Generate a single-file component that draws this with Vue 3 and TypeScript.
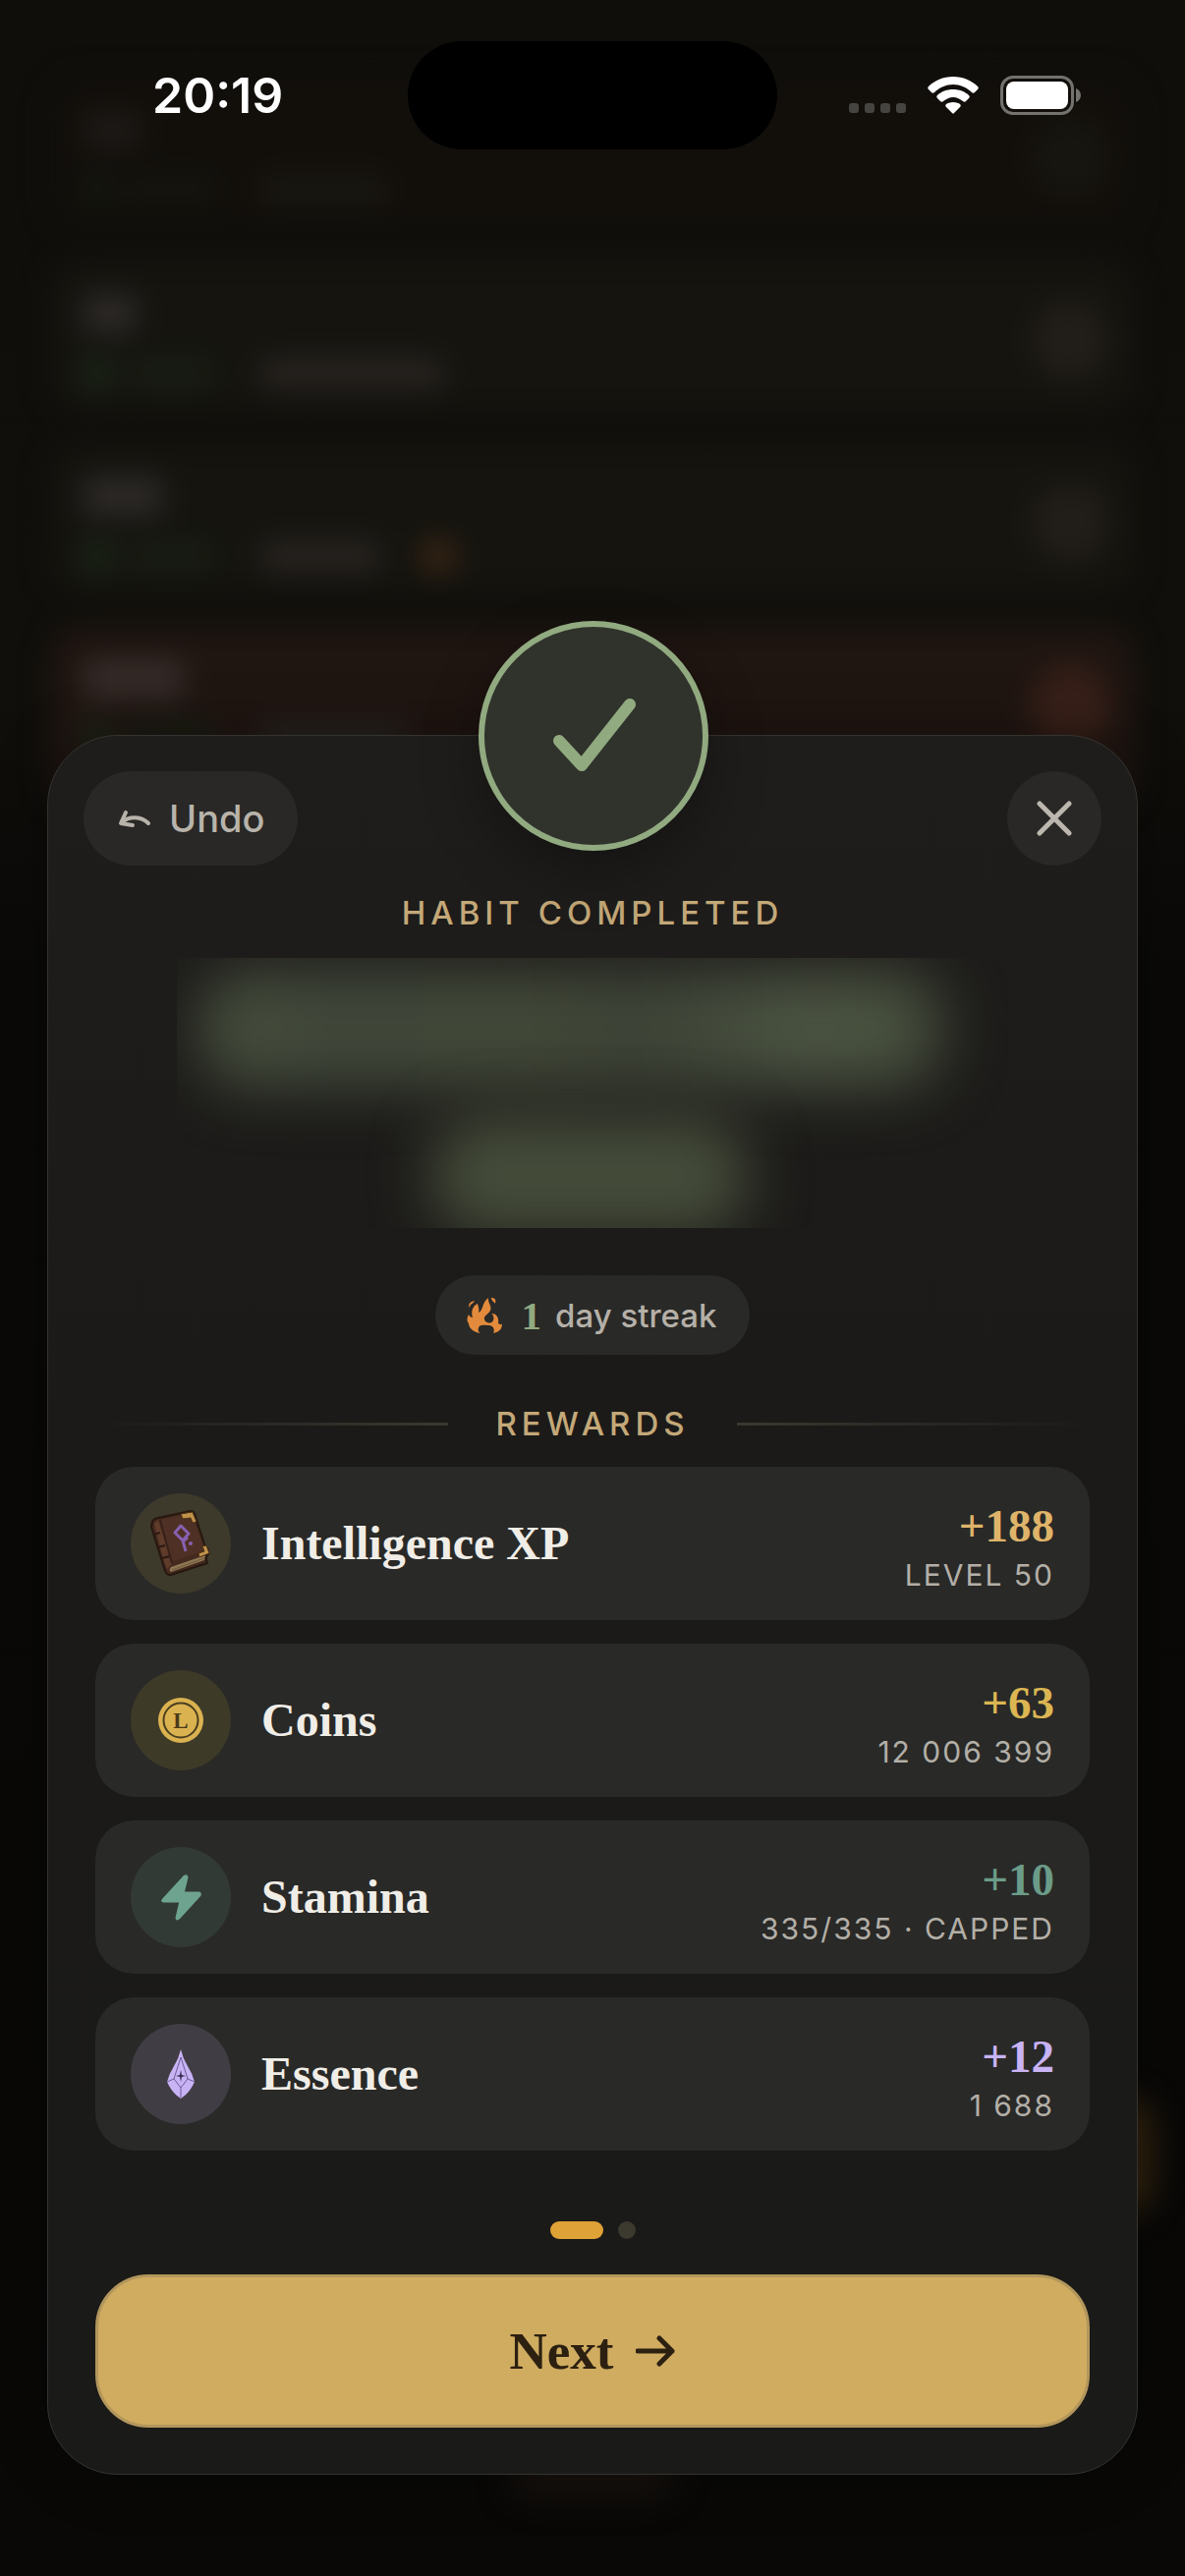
<script setup lang="ts">
interface Reward {
  id: 'intelligence' | 'coins' | 'stamina' | 'essence'
  name: string
  gain: string
  total: string
}

interface Habit {
  id: number
  title: number
  note: number
  streak: boolean
  overdue: boolean
}

const rewards: Reward[] = [
  { id: 'intelligence', name: 'Intelligence XP', gain: '+188', total: 'LEVEL 50' },
  { id: 'coins', name: 'Coins', gain: '+63', total: '12 006 399' },
  { id: 'stamina', name: 'Stamina', gain: '+10', total: '335/335 · CAPPED' },
  { id: 'essence', name: 'Essence', gain: '+12', total: '1 688' },
]

const habits: Habit[] = [
  { id: 1, title: 60, note: 130, streak: false, overdue: false },
  { id: 2, title: 56, note: 188, streak: false, overdue: false },
  { id: 3, title: 82, note: 124, streak: true, overdue: false },
  { id: 4, title: 104, note: 150, streak: false, overdue: true },
]
</script>

<template>
  <div class="screen">
    <div class="backdrop" aria-hidden="true">
      <div class="habits">
        <div v-for="h in habits" :key="h.id" class="habit" :class="{ overdue: h.overdue, first: h.id === 1 }">
          <div class="habit-text">
            <span class="smudge title" :style="{ width: h.title + 'px' }"></span>
            <div class="meta">
              <span class="smudge leaf"></span>
              <span class="smudge effort"></span>
              <span class="smudge note" :style="{ width: h.note + 'px' }"></span>
              <span v-if="h.streak" class="smudge ember"></span>
            </div>
          </div>
          <span class="smudge check"></span>
        </div>
      </div>
      <span class="glow side"></span>
      <span class="glow foot"></span>
    </div>

    <header class="status">
      <time class="clock">20:19</time>
      <div class="island"></div>
      <div class="signals">
        <svg class="cell" width="58" height="38" viewBox="0 0 58 38">
          <g fill="#454440">
            <rect x="0" y="27" width="10" height="10" rx="3" />
            <rect x="16" y="27" width="10" height="10" rx="3" />
            <rect x="32" y="27" width="10" height="10" rx="3" />
            <rect x="48" y="27" width="10" height="10" rx="3" />
          </g>
        </svg>
        <svg width="52" height="38" viewBox="0 0 52 38" fill="#fff">
          <path d="M26 0C36 0 45 4 51 10c1 1 1 2 0 3l-3 3c-1 1-2 1-3 0C40 11 33 8 26 8S12 11 7 16c-1 1-2 1-3 0l-3-3c-1-1-1-2 0-3C7 4 16 0 26 0z" />
          <path d="M26 13c6 0 12 2 16 6 1 1 1 2 0 3l-3 3c-1 1-2 1-3 0-3-2-6-4-10-4s-7 2-10 4c-1 1-2 1-3 0l-3-3c-1-1-1-2 0-3 4-4 10-6 16-6z" />
          <path d="M26 26c3 0 6 1 7 2 1 1 1 2 0 3l-6 6c-1 1-1 1-2 0l-6-6c-1-1-1-2 0-3 1-1 4-2 7-2z" />
        </svg>
        <svg width="82" height="40" viewBox="0 0 82 40">
          <rect x="1.5" y="1.5" width="72" height="37" rx="11.5" fill="none" stroke="#73726f" stroke-width="3" />
          <rect x="6" y="6" width="63" height="28" rx="8" fill="#fff" />
          <path d="M77 13c3 1 5 4 5 7s-2 6-5 7z" fill="#73726f" />
        </svg>
      </div>
    </header>

    <main class="sheet">
      <div class="medal">
        <svg width="222" height="222" viewBox="0 0 222 222" fill="none" stroke="#91aa80" stroke-width="12" stroke-linecap="round" stroke-linejoin="round">
          <path d="M76 116l23 25 49-62" />
        </svg>
      </div>

      <div class="actions">
        <button type="button" class="chip undo">
          <svg width="36" height="36" viewBox="0 0 36 36" fill="none" stroke="#b8b3aa" stroke-width="4" stroke-linecap="round" stroke-linejoin="round">
            <path d="M9 12L4 23l12 2" />
            <path d="M5 22c8-7 20-6 27 1" />
          </svg>
          <span>Undo</span>
        </button>
        <button type="button" class="chip close" aria-label="Close">
          <svg width="36" height="36" viewBox="0 0 36 36" fill="none" stroke="#bcb7ae" stroke-width="5" stroke-linecap="round">
            <path d="M3 3l30 30M33 3L3 33" />
          </svg>
        </button>
      </div>

      <p class="eyebrow">HABIT COMPLETED</p>

      <div class="habit-name" aria-hidden="true">
        <span class="line long"></span>
        <span class="line short"></span>
      </div>

      <div class="streak">
        <svg width="36" height="38" viewBox="0 0 36 38" fill="#e38b3c">
          <path d="M22 1C21 6 26 9 24 14C22 18 17 19 18 23C19 27 25 28 27 24C28 21 27 18 25 17C31 17 33 22 32 27C34 28 35 29 36 27C36 33 33 36 27 37C29 33 27 29 22 29C15 28 12 29 12 32C11 34 12 36 14 37C7 36 2 32 2 27C0 25 0 22 2 18C3 20 4 21 6 21C4 16 6 9 11 7C12 10 13 13 12 16C17 14 15 6 22 1z" />
          <path d="M8 4c-1 3-5 3-5 7-2-3 0-6 5-7z" />
          <path d="M25 1c4 0 5 2 4 6-1-2-4-3-4-6z" />
        </svg>
        <strong>1</strong>
        <span>day streak</span>
      </div>

      <h2 class="divider"><span>REWARDS</span></h2>

      <ul class="rewards">
        <li v-for="r in rewards" :key="r.id" class="reward" :class="r.id">
          <svg v-if="r.id === 'intelligence'" class="badge" width="102" height="102" viewBox="0 0 102 102" stroke-linejoin="round">
            <path d="M22 29q1-3 6-4l33-7q3 0 4 3l11 34q4 2 3 7-3 2-2 6l1 3-37 12q-4 1-6-4L21 34z" fill="#442a1e" stroke="#26170f" stroke-width="2" />
            <path d="M24 31l4-4 14 45-5 5q-3-7-5-14z" fill="#5f3b2a" />
            <path d="M23 42l7-2M27 55l8-2M32 66l8-2" stroke="#2c1a12" stroke-width="2" />
            <path d="M30 27l32-7 14 38-35 12z" fill="#4f3024" />
            <path d="M30 27l12 44" stroke="#38211a" stroke-width="2" />
            <path d="M41 75l35-12-1 5-34 12q-3-2 0-5z" fill="#8f7754" />
            <path d="M42 78l33-12" stroke="#6f583c" stroke-width="1" />
            <path d="M51 21l12-2 4 10-4 1-2-5-8 1z" fill="#c0924a" stroke="#4a3018" stroke-width="1" />
            <path d="M73 54l4-1 3 8-10 4-1-4 6-2z" fill="#c0924a" stroke="#4a3018" stroke-width="1" />
            <path d="M51 33l8 8-6 7-8-8zM53 48l3 11M53 49l5-4" fill="none" stroke="#8660b0" stroke-width="3" />
            <circle cx="61" cy="51" r="2" fill="#8660b0" />
          </svg>
          <svg v-else-if="r.id === 'coins'" class="badge" width="102" height="102" viewBox="0 0 102 102">
            <circle cx="51" cy="51" r="23" fill="#dbb250" />
            <circle cx="51" cy="51" r="17.5" fill="none" stroke="#4a3e1e" stroke-width="2" />
            <text x="51" y="59" text-anchor="middle" class="coin-mark">L</text>
          </svg>
          <svg v-else-if="r.id === 'stamina'" class="badge" width="102" height="102" viewBox="0 0 102 102">
            <path d="M55 30L33 54q-1 1 1 1h17l-4 17q0 2 2 0l21-23q1-2-1-2H53l4-16q0-2-2-1z" fill="#6ea48f" stroke="#6ea48f" stroke-width="3" stroke-linejoin="round" />
          </svg>
          <svg v-else class="badge" width="102" height="102" viewBox="0 0 102 102" stroke-linejoin="round">
            <path d="M51 26q2 9 7 17 5 8 7 16-4 9-10 14l-4 3-4-3q-6-5-10-14 2-8 7-16 5-8 7-17z" fill="#c8b3f5" />
            <path d="M51 34L44 56l7 9 7-9zM37 59l7-3M65 59l-7-3M51 65v10" fill="none" stroke="#6f5c96" stroke-width="1" />
            <path d="M51 47l1 5 4 1-4 1-1 5-1-5-4-1 4-1z" fill="#3a2f55" />
          </svg>
          <span class="name">{{ r.name }}</span>
          <div class="amount">
            <strong>{{ r.gain }}</strong>
            <span>{{ r.total }}</span>
          </div>
        </li>
      </ul>

      <div class="pager" aria-hidden="true">
        <span class="dot current"></span>
        <span class="dot"></span>
      </div>

      <button type="button" class="next">
        <span>Next</span>
        <svg width="40" height="32" viewBox="0 0 40 32" fill="none" stroke="#2c2011" stroke-width="5" stroke-linecap="round" stroke-linejoin="round">
          <path d="M2 16h35M24 3l13 13-13 13" />
        </svg>
      </button>
    </main>
  </div>
</template>

<style>
body {
  margin: 0;
  background: #0c0b09;
}
</style>

<style scoped>
.screen {
  position: relative;
  display: flex;
  flex-direction: column;
  min-height: 100vh;
  box-sizing: border-box;
  padding-bottom: 103px;
  overflow: hidden;
  background: linear-gradient(#0f0e0b 0, #100f0b 700px, #0a0908 1000px, #090807 100%);
  font-family: Inter, "Noto Sans", sans-serif;
}

.backdrop {
  position: absolute;
  inset: 0;
  overflow: hidden;
}

.habits {
  display: flex;
  flex-direction: column;
  gap: 30px;
  padding: 78px 50px 0;
  filter: blur(14px);
}

.habit {
  display: flex;
  justify-content: space-between;
  align-items: center;
  height: 156px;
  box-sizing: border-box;
  padding: 8px 26px 0 34px;
  border-radius: 36px;
  background: #15140f;
}

.habit.first {
  background: #120f0b;
}

.habit.first .smudge {
  opacity: 0.4;
}

.habit.overdue {
  height: 190px;
  padding-bottom: 34px;
  background: #1f1511;
}

.habit-text {
  display: flex;
  flex-direction: column;
  gap: 24px;
  padding-top: 4px;
}

.smudge {
  display: block;
  height: 34px;
  border-radius: 12px;
}

.title {
  height: 40px;
  background: #2c2927;
}

.meta {
  display: flex;
  gap: 16px;
}

.leaf {
  width: 30px;
  background: #1a2618;
}

.effort {
  width: 88px;
  background: #181c13;
}

.note {
  margin-left: 30px;
  background: #26221f;
}

.ember {
  width: 36px;
  margin-left: 24px;
  background: #382414;
}

.check {
  width: 82px;
  height: 82px;
  border-radius: 50%;
  background: #211d18;
}

.overdue .title {
  background: #352c29;
}

.overdue .check {
  background: #371f18;
}

.glow {
  position: absolute;
  filter: blur(16px);
  border-radius: 40px;
}

.glow.side {
  top: 2134px;
  right: 34px;
  width: 60px;
  height: 120px;
  background: #34250f;
}

.glow.foot {
  bottom: 80px;
  left: 50%;
  width: 170px;
  height: 50px;
  margin-left: -85px;
  background: #17120e;
}

.status {
  position: relative;
  display: grid;
  grid-template-columns: 1fr 376px 1fr;
  align-items: center;
  padding-top: 42px;
}

.clock {
  padding-left: 155px;
  color: #fff;
  font-size: 50px;
  line-height: 60px;
  font-weight: 600;
}

.island {
  height: 110px;
  border-radius: 55px;
  background: #000;
}

.signals {
  display: flex;
  justify-content: flex-end;
  align-items: center;
  gap: 22px;
  padding-right: 106px;
}

.sheet {
  position: relative;
  display: flex;
  flex-direction: column;
  margin: auto 48px 0;
  padding: 36px 48px 47px;
  border: 1px solid #35332f;
  border-radius: 72px;
  background: linear-gradient(#1e1d1b, #1b1a18 40%, #1a1a18);
  box-shadow: 0 0 60px rgba(0, 0, 0, 0.3);
}

.medal {
  position: absolute;
  top: -117px;
  left: 50%;
  width: 222px;
  height: 222px;
  margin-left: -116px;
  border: 6px solid #91aa80;
  border-radius: 50%;
  background: #30332c;
  box-shadow: 0 24px 60px rgba(0, 0, 0, 0.3);
}

.medal svg {
  display: block;
}

.actions {
  display: flex;
  justify-content: space-between;
  margin: 0 -12px;
}

button {
  margin: 0;
  border: 0;
  font-family: inherit;
  cursor: pointer;
}

.chip {
  display: flex;
  align-items: center;
  justify-content: center;
  height: 96px;
  padding: 0;
  border-radius: 48px;
  background: #292826;
  color: #b8b3aa;
}

.undo {
  gap: 17px;
  padding: 0 34px;
  font-size: 38px;
  font-weight: 500;
}

.close {
  width: 96px;
}

.eyebrow,
.divider {
  margin: 28px 0 0;
  color: #c4a878;
  font-size: 33px;
  line-height: 40px;
  font-weight: 500;
  letter-spacing: 5px;
  text-align: center;
}

.habit-name {
  display: flex;
  flex-direction: column;
  gap: 30px;
  height: 275px;
  box-sizing: border-box;
  margin: 26px 83px 0;
  padding: 12px 0 0;
  overflow: hidden;
}

.line {
  display: block;
  flex: none;
  border-radius: 50px;
  filter: blur(30px);
}

.line.long {
  height: 120px;
  margin: 0 66px 0 22px;
  background: linear-gradient(90deg, #474f3d, #40473a 20%, #434a39 40%, #3e4437 60%, #4b5442 82%, #454d3b);
}

.line.short {
  height: 120px;
  margin: 0 266px 0 260px;
  background: #454c3a;
}

.streak {
  display: flex;
  align-items: center;
  align-self: center;
  height: 81px;
  margin-top: 48px;
  padding: 0 34px 0 32px;
  border-radius: 41px;
  background: #292927;
  color: #b5b0a8;
  font-size: 33px;
  font-weight: 500;
}

.streak strong {
  margin: 0 14px 0 20px;
  color: #91aa80;
  font-family: "Liberation Serif", serif;
  font-size: 41px;
}

.divider {
  display: flex;
  align-items: center;
  gap: 48px;
  margin-top: 50px;
}

.divider::before,
.divider::after {
  content: "";
  flex: 1;
  height: 3px;
  background: linear-gradient(90deg, transparent, #3a3830);
}

.divider::after {
  background: linear-gradient(90deg, #3a3830, transparent);
}

.rewards {
  display: flex;
  flex-direction: column;
  gap: 24px;
  margin: 24px 0 0;
  padding: 0;
  list-style: none;
}

.reward {
  display: flex;
  align-items: center;
  height: 156px;
  box-sizing: border-box;
  padding: 0 36px;
  border-radius: 39px;
  background: #292927;
}

.badge {
  flex: none;
  border-radius: 50%;
}

.name {
  flex: 1;
  margin-left: 31px;
  color: #f0ede7;
  font-family: "Liberation Serif", serif;
  font-size: 48px;
  line-height: 54px;
  font-weight: 700;
}

.amount {
  display: flex;
  flex-direction: column;
  align-items: flex-end;
}

.amount strong {
  font-family: "Liberation Serif", serif;
  font-size: 47px;
  line-height: 63px;
}

.amount span {
  color: #b3afa8;
  font-size: 30px;
  line-height: 36px;
  letter-spacing: 2px;
}

.coin-mark {
  fill: #4a3a18;
  font-family: "Liberation Serif", serif;
  font-size: 23px;
  font-weight: 700;
}

.intelligence .badge {
  background: #3d392b;
}

.intelligence strong {
  color: #dfb46a;
}

.coins .badge {
  background: #3e3a28;
}

.coins strong {
  color: #dbb652;
}

.stamina .badge {
  background: #323a35;
}

.stamina strong {
  color: #6b9c89;
}

.essence .badge {
  background: #413d44;
}

.essence strong {
  color: #c8b3f5;
}

.pager {
  display: flex;
  justify-content: center;
  gap: 15px;
  margin-top: 72px;
}

.dot {
  width: 18px;
  height: 18px;
  border-radius: 9px;
  background: #3c392e;
}

.dot.current {
  width: 54px;
  background: #dfa236;
}

.next {
  display: flex;
  align-items: center;
  justify-content: center;
  gap: 23px;
  height: 156px;
  margin-top: 36px;
  border: 3px solid #b3965c;
  border-radius: 54px;
  background: #cfac60;
  color: #2c2011;
  font-family: "Liberation Serif", serif;
  font-size: 53px;
  font-weight: 700;
}
</style>
